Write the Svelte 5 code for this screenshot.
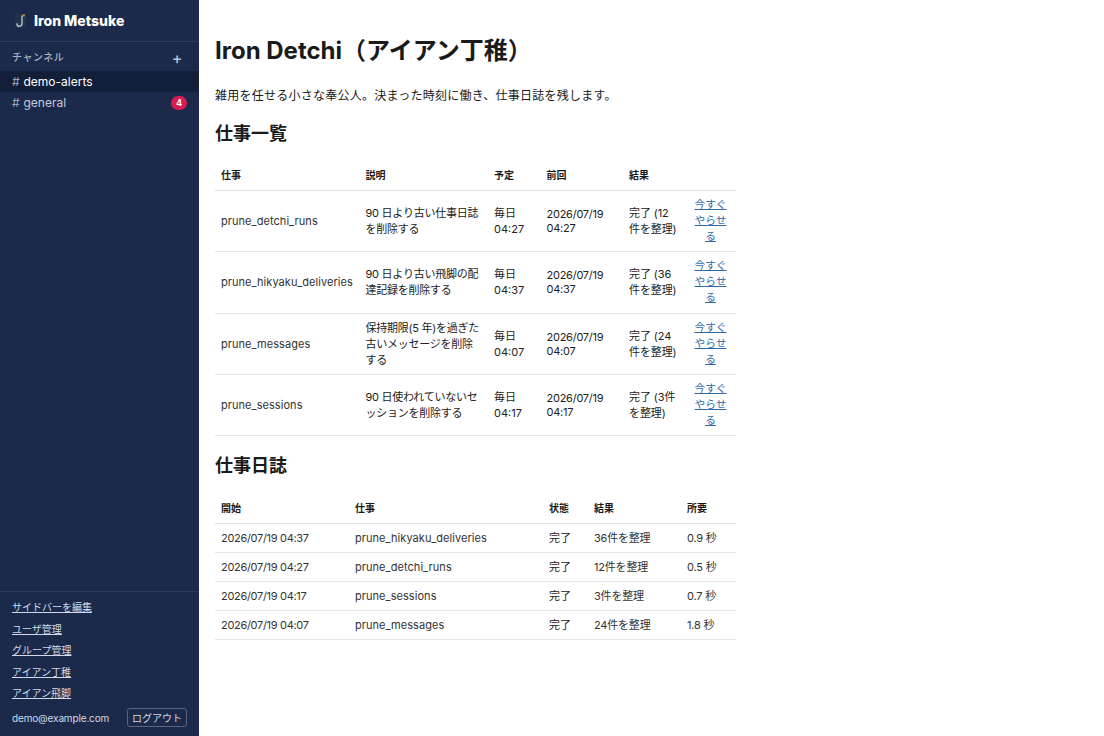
<script>
  const jobs = [
    { name: 'prune_detchi_runs', desc: '90 日より古い仕事日誌を削除する', sched: ['毎日', '04:27'], last: ['2026/07/19', '04:27'], result: '完了 (12件を整理)' },
    { name: 'prune_hikyaku_deliveries', desc: '90 日より古い飛脚の配達記録を削除する', sched: ['毎日', '04:37'], last: ['2026/07/19', '04:37'], result: '完了 (36件を整理)' },
    { name: 'prune_messages', desc: '保持期限(5 年)を過ぎた古いメッセージを削除する', sched: ['毎日', '04:07'], last: ['2026/07/19', '04:07'], result: '完了 (24件を整理)' },
    { name: 'prune_sessions', desc: '90 日使われていないセッションを削除する', sched: ['毎日', '04:17'], last: ['2026/07/19', '04:17'], result: '完了 (3件を整理)' }
  ];
  const logs = [
    ['2026/07/19 04:37', 'prune_hikyaku_deliveries', '完了', '36件を整理', '0.9 秒'],
    ['2026/07/19 04:27', 'prune_detchi_runs', '完了', '12件を整理', '0.5 秒'],
    ['2026/07/19 04:17', 'prune_sessions', '完了', '3件を整理', '0.7 秒'],
    ['2026/07/19 04:07', 'prune_messages', '完了', '24件を整理', '1.8 秒']
  ];
  const links = ['サイドバーを編集', 'ユーザ管理', 'グループ管理', 'アイアン丁稚', 'アイアン飛脚'];
</script>

<div class="app">
  <aside class="sidebar">
    <div class="brand">
      <svg class="logo" width="16" height="16" viewBox="0 0 16 16" fill="none">
        <rect x="3" y="1" width="11" height="14" rx="2" fill="#2b3955" opacity="0.6" />
        <path d="M10 2.5 L10 10 Q10 13.4 7.4 13.4 Q5 13.4 4.8 10.4" stroke="#b9bfca" stroke-width="1.4" />
        <rect x="10.6" y="1.4" width="2.2" height="2" fill="#e08a2c" />
      </svg>
      <span>Iron Metsuke</span>
    </div>
    <div class="section">
      <span>チャンネル</span>
      <span class="plus">+</span>
    </div>
    <ul class="channels">
      <li class="active"><span class="hash">#</span> demo-alerts</li>
      <li><span class="hash">#</span> general<span class="badge">4</span></li>
    </ul>
    <div class="foot">
      {#each links as l}
        <a href="#top" class="foot-link">{l}</a>
      {/each}
      <div class="user">
        <span class="email">demo@example.com</span>
        <button>ログアウト</button>
      </div>
    </div>
  </aside>

  <main class="main">
    <h1>Iron Detchi（アイアン丁稚）</h1>
    <p>雑用を任せる小さな奉公人。決まった時刻に働き、仕事日誌を残します。</p>
    <h2>仕事一覧</h2>
    <table class="jobs">
      <colgroup>
        <col class="j1" /><col class="j2" /><col class="j3" /><col class="j4" /><col class="j5" /><col />
      </colgroup>
      <thead>
        <tr><th>仕事</th><th>説明</th><th>予定</th><th>前回</th><th>結果</th><th></th></tr>
      </thead>
      <tbody>
        {#each jobs as j}
          <tr>
            <td class="name">{j.name}</td>
            <td class="desc">{j.desc}</td>
            <td>{j.sched[0]}<br />{j.sched[1]}</td>
            <td class="date">{j.last[0]}<br />{j.last[1]}</td>
            <td class="res">{j.result}</td>
            <td class="act"><a href="#top">今すぐやらせる</a></td>
          </tr>
        {/each}
      </tbody>
    </table>
    <h2 class="second">仕事日誌</h2>
    <table class="logs">
      <colgroup>
        <col class="l1" /><col class="l2" /><col class="l3" /><col class="l4" /><col />
      </colgroup>
      <thead>
        <tr><th>開始</th><th>仕事</th><th>状態</th><th>結果</th><th>所要</th></tr>
      </thead>
      <tbody>
        {#each logs as row}
          <tr>
            <td class="stamp">{row[0]}</td>
            <td class="name">{row[1]}</td>
            <td>{row[2]}</td>
            <td class="count">{row[3]}</td>
            <td class="dur">{row[4]}</td>
          </tr>
        {/each}
      </tbody>
    </table>
  </main>
</div>

<style>
  :global(body) {
    margin: 0;
    background: #fff;
    font-family: Inter, "Noto Sans CJK JP", sans-serif;
    color: #1a1a1a;
  }
  .app {
    display: flex;
    height: 736px;
    overflow: hidden;
  }
  .sidebar {
    width: 199px;
    flex: none;
    background: #1b2a4a;
    color: #fff;
    display: flex;
    flex-direction: column;
  }
  .brand {
    height: 42px;
    box-sizing: border-box;
    border-bottom: 1px solid #2b3a5a;
    display: flex;
    align-items: center;
    gap: 6px;
    padding: 0 12px;
    font-size: 14px;
    font-weight: 800;
  }
  .logo { flex: none; }
  .section {
    display: flex;
    justify-content: space-between;
    align-items: center;
    padding: 2px 12px 0;
    height: 27px;
    box-sizing: border-box;
    color: #a9b2c4;
    font-size: 10px;
    font-weight: 500;
    letter-spacing: 0.5px;
  }
  .plus {
    font-size: 16px;
    line-height: 16px;
    padding: 2px 4px 0 0;
    color: #b8c0d0;
  }
  .channels {
    list-style: none;
    margin: 2px 0 0;
    padding: 0;
    font-size: 12px;
  }
  .channels li {
    height: 21px;
    line-height: 21px;
    padding: 0 12px;
    position: relative;
    color: #c3cad8;
  }
  .channels li.active {
    background: #131f38;
    color: #fff;
  }
  .hash {
    color: #9aa3b5;
    margin-right: 0.5px;
  }
  .badge {
    position: absolute;
    right: 12px;
    top: 4px;
    width: 16px;
    height: 14px;
    border-radius: 7px;
    background: #d81e50;
    color: #fff;
    font-size: 9px;
    font-weight: 700;
    line-height: 14px;
    text-align: center;
  }
  .foot {
    margin-top: auto;
    border-top: 1px solid #2b3a5a;
    padding: 6.5px 12px 9px;
    display: flex;
    flex-direction: column;
    align-items: flex-start;
    font-size: 10px;
  }
  .foot-link {
    color: #d3d9e6;
    height: 21.5px;
    line-height: 19px;
  }
  .user {
    align-self: stretch;
    display: flex;
    justify-content: space-between;
    align-items: center;
    color: #d3d9e6;
    margin-top: 2.5px;
  }
  .email { letter-spacing: -0.15px; }
  .user button {
    font: inherit;
    color: #d3d9e6;
    background: transparent;
    border: 1px solid #59647e;
    border-radius: 3px;
    height: 19px;
    width: 60px;
    padding: 0;
  }
  .main {
    flex: 1;
    padding: 0 16px;
    min-width: 0;
  }
  h1 {
    font-size: 24px;
    line-height: 29px;
    font-weight: 700;
    margin: 36px 0 0;
  }
  p {
    font-size: 12px;
    line-height: 16px;
    margin: 23px 0 0;
    letter-spacing: 0.25px;
  }
  h2 {
    font-size: 18px;
    line-height: 22px;
    font-weight: 700;
    margin: 19px 0 0;
  }
  h2.second { margin-top: 19px; }
  table {
    width: 521px;
    table-layout: fixed;
    border-collapse: collapse;
    font-size: 11px;
    line-height: 16.1px;
  }
  table.jobs { margin-top: 15px; }
  table.logs {
    margin-top: 16px;
    line-height: 16px;
  }
  th {
    text-align: left;
    font-weight: 700;
    font-size: 10px;
    padding: 6px;
    border-bottom: 1px solid #ddd;
    height: 18px;
  }
  td {
    padding: 6px;
    border-bottom: 1px solid #e6e6e6;
    vertical-align: middle;
    color: #222;
  }
  .j1 { width: 144.5px; }
  .j2 { width: 128.5px; }
  .j3 { width: 52.5px; }
  .j4 { width: 82.5px; }
  .j5 { width: 65px; }
  .l1 { width: 134px; }
  .l2 { width: 194px; }
  .l3 { width: 45px; }
  .l4 { width: 93px; }
  .name { letter-spacing: 0.06px; color: #333; }
  .desc { letter-spacing: -0.25px; }
  .date { letter-spacing: -0.25px; line-height: 14px; }
  .res { padding-right: 10px; letter-spacing: -0.1px; }
  .stamp { letter-spacing: -0.31px; color: #333; }
  .count { letter-spacing: -0.2px; color: #333; }
  .dur { letter-spacing: -0.2px; color: #333; }
  .act { text-align: center; padding-right: 9px; font-size: 10.7px; }
  .act a { color: #2f6aa8; }
</style>
